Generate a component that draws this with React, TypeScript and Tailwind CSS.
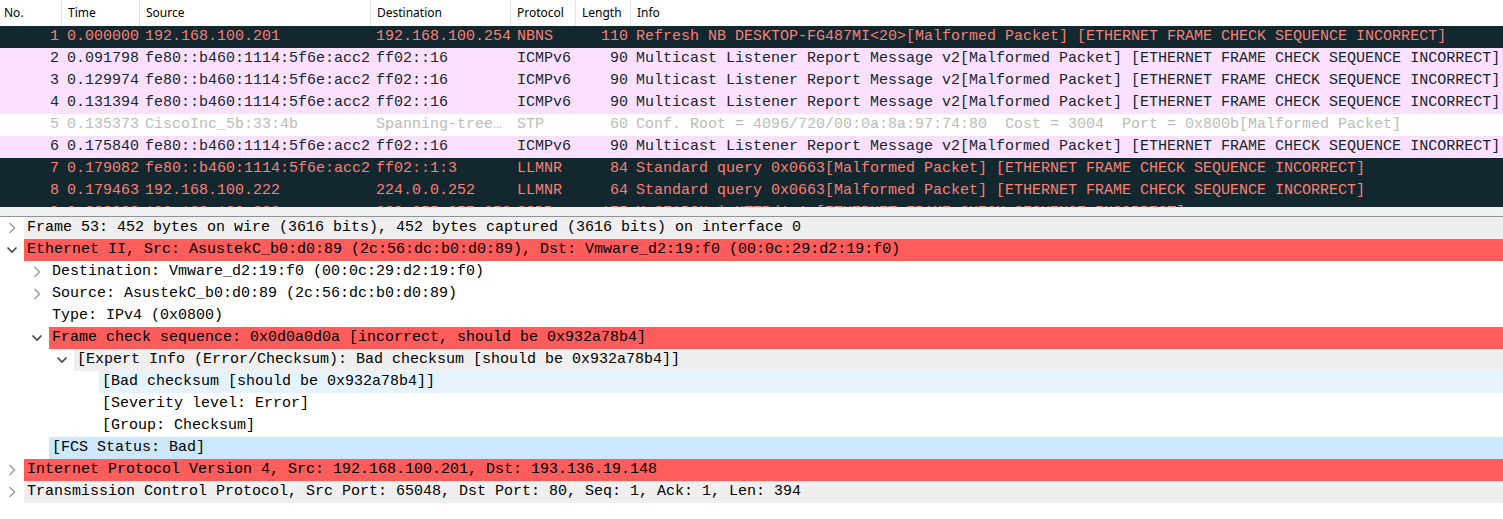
import React from "react";

type Kind = "bad" | "icmp" | "bcast";

interface Packet {
  no: number;
  time: string;
  src: string;
  dst: string;
  proto: string;
  len: number;
  info: string;
  kind: Kind;
}

const FCS = "[ETHERNET FRAME CHECK SEQUENCE INCORRECT]";
const MLR = "Multicast Listener Report Message v2[Malformed Packet] " + FCS;
const V6 = "fe80::b460:1114:5f6e:acc2";

// destination names are already elided the way the packet list shows them
const packets: Packet[] = [
  { no: 1, time: "0.000000", src: "192.168.100.201", dst: "192.168.100.254", proto: "NBNS", len: 110, info: "Refresh NB DESKTOP-FG487MI<20>[Malformed Packet] " + FCS, kind: "bad" },
  { no: 2, time: "0.091798", src: V6, dst: "ff02::16", proto: "ICMPv6", len: 90, info: MLR, kind: "icmp" },
  { no: 3, time: "0.129974", src: V6, dst: "ff02::16", proto: "ICMPv6", len: 90, info: MLR, kind: "icmp" },
  { no: 4, time: "0.131394", src: V6, dst: "ff02::16", proto: "ICMPv6", len: 90, info: MLR, kind: "icmp" },
  { no: 5, time: "0.135373", src: "CiscoInc_5b:33:4b", dst: "Spanning-tree…", proto: "STP", len: 60, info: "Conf. Root = 4096/720/00:0a:8a:97:74:80  Cost = 3004  Port = 0x800b[Malformed Packet]", kind: "bcast" },
  { no: 6, time: "0.175840", src: V6, dst: "ff02::16", proto: "ICMPv6", len: 90, info: MLR, kind: "icmp" },
  { no: 7, time: "0.179082", src: V6, dst: "ff02::1:3", proto: "LLMNR", len: 84, info: "Standard query 0x0663[Malformed Packet] " + FCS, kind: "bad" },
  { no: 8, time: "0.179463", src: "192.168.100.222", dst: "224.0.0.252", proto: "LLMNR", len: 64, info: "Standard query 0x0663[Malformed Packet] " + FCS, kind: "bad" },
  { no: 9, time: "0.208388", src: "192.168.100.222", dst: "239.255.255.250", proto: "SSDP", len: 175, info: "M-SEARCH * HTTP/1.1 " + FCS, kind: "bad" },
];

const rowStyle: Record<Kind, string> = {
  bad: "bg-[#12272e] text-[#f78077]",
  icmp: "bg-[#fce0ff] text-[#12272e]",
  bcast: "bg-white text-[#babdb6]",
};

const mono = "font-['Liberation_Mono','DejaVu_Sans_Mono',monospace] text-[15px] leading-[22px]";

// header columns
const cols = [
  { label: "No.", w: "w-[62px] pl-[4px]" },
  { label: "Time", w: "w-[78px] pl-[6px]" },
  { label: "Source", w: "w-[231px] pl-[6px]" },
  { label: "Destination", w: "w-[140px] pl-[6px]" },
  { label: "Protocol", w: "w-[65px] pl-[6px]" },
  { label: "Length", w: "w-[55px] pl-[6px]" },
];

const Right = () => (
  <svg width="8" height="12" viewBox="0 0 8 12">
    <polyline points="1.5,1 6.5,6 1.5,11" fill="none" stroke="#a3a3a3" strokeWidth="1.6" />
  </svg>
);

const Down = () => (
  <svg width="12" height="8" viewBox="0 0 12 8">
    <polyline points="1.5,1.5 6,6 10.5,1.5" fill="none" stroke="#444444" strokeWidth="1.6" />
  </svg>
);

interface TreeItem {
  text: string;
  level: number;
  arrow?: "open" | "closed";
  bg?: string;
}

const tree: TreeItem[] = [
  { text: "Frame 53: 452 bytes on wire (3616 bits), 452 bytes captured (3616 bits) on interface 0", level: 0, arrow: "closed", bg: "bg-[#efefef]" },
  { text: "Ethernet II, Src: AsustekC_b0:d0:89 (2c:56:dc:b0:d0:89), Dst: Vmware_d2:19:f0 (00:0c:29:d2:19:f0)", level: 0, arrow: "open", bg: "bg-[#ff5c5c]" },
  { text: "Destination: Vmware_d2:19:f0 (00:0c:29:d2:19:f0)", level: 1, arrow: "closed" },
  { text: "Source: AsustekC_b0:d0:89 (2c:56:dc:b0:d0:89)", level: 1, arrow: "closed" },
  { text: "Type: IPv4 (0x0800)", level: 1 },
  { text: "Frame check sequence: 0x0d0a0d0a [incorrect, should be 0x932a78b4]", level: 1, arrow: "open", bg: "bg-[#ff5c5c]" },
  { text: "[Expert Info (Error/Checksum): Bad checksum [should be 0x932a78b4]]", level: 2, arrow: "open", bg: "bg-[#efefef]" },
  { text: "[Bad checksum [should be 0x932a78b4]]", level: 3, bg: "bg-[#e5f3ff]" },
  { text: "[Severity level: Error]", level: 3 },
  { text: "[Group: Checksum]", level: 3 },
  { text: "[FCS Status: Bad]", level: 1, bg: "bg-[#cce8ff]" },
  { text: "Internet Protocol Version 4, Src: 192.168.100.201, Dst: 193.136.19.148", level: 0, arrow: "closed", bg: "bg-[#ff5c5c]" },
  { text: "Transmission Control Protocol, Src Port: 65048, Dst Port: 80, Seq: 1, Ack: 1, Len: 394", level: 0, arrow: "closed", bg: "bg-[#efefef]" },
];

const indent = ["pl-0", "pl-[25px]", "pl-[50px]", "pl-[75px]"];

export default function App() {
  return (
    <div className="w-[1503px] h-[519px] bg-white overflow-hidden">
      {/* packet list */}
      <div className="h-[207px] overflow-hidden">
        <div className="flex h-[26px] items-center bg-white text-black text-[12px] font-['Noto_Sans','Liberation_Sans',sans-serif]">
          {cols.map((c) => (
            <div key={c.label} className={`${c.w} h-full flex items-center border-r border-[#e5e5e5]`}>
              {c.label}
            </div>
          ))}
          <div className="flex-1 pl-[6px]">Info</div>
        </div>
        {packets.map((p) => (
          <div key={p.no} className={`flex h-[22px] whitespace-pre ${mono} ${rowStyle[p.kind]}`}>
            <div className="w-[62px] text-right pr-[3px]">{p.no}</div>
            <div className="w-[78px] pl-[5px]">{p.time}</div>
            <div className="w-[231px] pl-[5px]">{p.src}</div>
            <div className="w-[140px] pl-[5px]">{p.dst}</div>
            <div className="w-[65px] pl-[6px]">{p.proto}</div>
            <div className="w-[55px] text-right pr-[3px]">{p.len}</div>
            <div className="flex-1 pl-[5px] overflow-hidden">{p.info}</div>
          </div>
        ))}
      </div>

      {/* splitter */}
      <div className="h-[9px] bg-[#f0f0f0]" />
      <div className="h-[1px] bg-[#8f939b]" />

      {/* details tree */}
      <div className={`${mono} text-black`}>
        {tree.map((t, i) => (
          <div key={i} className={`flex h-[22px] ${indent[t.level]}`}>
            <div className="w-[24px] flex items-center justify-center">
              {t.arrow === "closed" && <Right />}
              {t.arrow === "open" && <Down />}
            </div>
            <div className={`flex-1 pl-[3px] whitespace-pre overflow-hidden ${t.bg ?? ""}`}>{t.text}</div>
          </div>
        ))}
      </div>
    </div>
  );
}
